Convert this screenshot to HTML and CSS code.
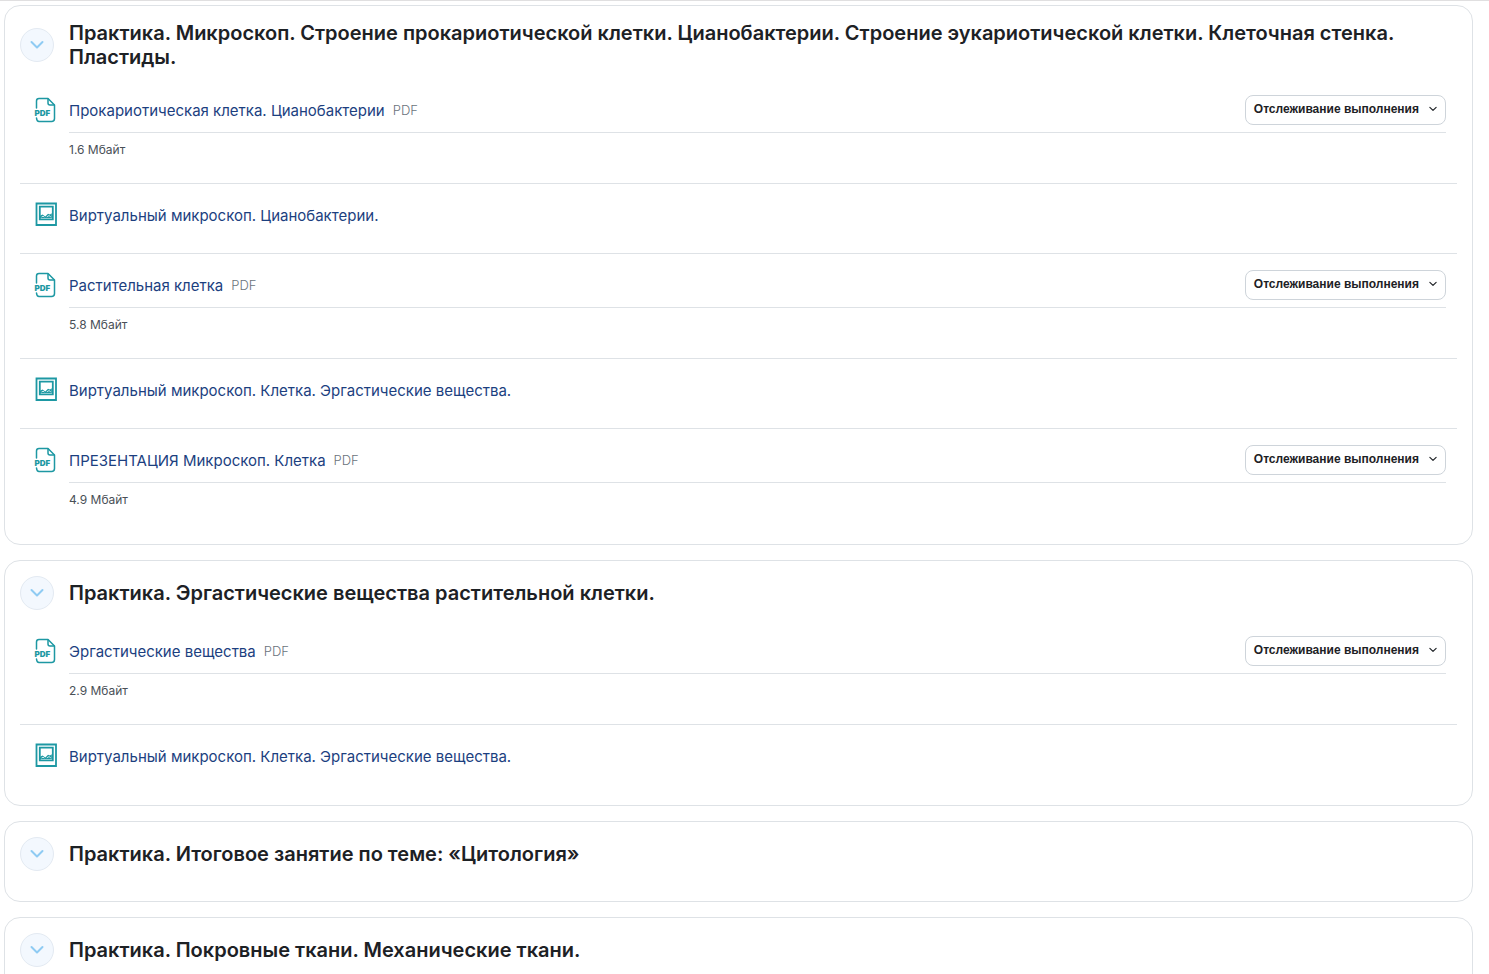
FILE: index.html
```html
<!DOCTYPE html>
<html lang="ru">
<head>
    <meta charset="UTF-8">
    <meta name="viewport" content="width=device-width, initial-scale=1.0">
    <title>Практика</title>
    <link rel="stylesheet" href="styles.css">
</head>
<body>
<svg class="sprite" aria-hidden="true">
    <symbol id="chevron" viewBox="0 0 14 10">
        <path d="M1.5 2 L7 7.5 L12.5 2" fill="none" stroke="currentColor" stroke-width="2" stroke-linecap="round" stroke-linejoin="round"/>
    </symbol>
    <symbol id="pdf" viewBox="0 0 24 26">
        <path d="M3.5 11 V4 Q3.5 1.5 6 1.5 H15 L21.5 8 V21.5 Q21.5 24.5 18.5 24.5 H6 Q3.8 24.5 3.5 21" fill="none" stroke="currentColor" stroke-width="1.5" stroke-linecap="round" stroke-linejoin="round"/>
        <path d="M15 1.5 V6 Q15 8 17 8 H21.5" fill="none" stroke="currentColor" stroke-width="1.5" stroke-linejoin="round"/>
        <text x="1.5" y="19" class="pdf-text">PDF</text>
    </symbol>
    <symbol id="picture" viewBox="0 0 24 26">
        <path d="M3.5 1.5 H23 V23 H3.5 Z" fill="none" stroke="currentColor" stroke-width="1.8"/>
        <path d="M6.8 4.6 H19.8 V17.4 H6.8 Z" fill="none" stroke="currentColor" stroke-width="1.8"/>
        <path d="M7 16 V13.8 L9.5 12.6 L12.3 14.4 L15 11.8 L17 12.6 L18.8 11.2 V16 Z" fill="currentColor"/>
        <path d="M8.5 15 L10 14.2 L11.3 15 M13.8 14.8 L16 13.6 L17.8 14.8" fill="none" stroke="#fff" stroke-width="0.8"/>
    </symbol>
</svg>

<main class="course">
    <section class="section">
        <header class="section-header">
            <button class="toggle" type="button" aria-label="Свернуть"><svg><use href="#chevron"/></svg></button>
            <h3>Практика. Микроскоп. Строение прокариотической клетки. Цианобактерии. Строение эукариотической клетки. Клеточная стенка. Пластиды.</h3>
        </header>
        <ul class="activities">
            <li class="activity">
                <div class="activity-head">
                    <svg class="icon"><use href="#pdf"/></svg>
                    <a href="#">Прокариотическая клетка. Цианобактерии</a>
                    <span class="badge">PDF</span>
                    <button class="completion" type="button">Отслеживание выполнения <svg><use href="#chevron"/></svg></button>
                </div>
                <div class="details">1.6 Мбайт</div>
            </li>
            <li class="activity">
                <div class="activity-head">
                    <svg class="icon"><use href="#picture"/></svg>
                    <a href="#">Виртуальный микроскоп. Цианобактерии.</a>
                </div>
            </li>
            <li class="activity">
                <div class="activity-head">
                    <svg class="icon"><use href="#pdf"/></svg>
                    <a href="#">Растительная клетка</a>
                    <span class="badge">PDF</span>
                    <button class="completion" type="button">Отслеживание выполнения <svg><use href="#chevron"/></svg></button>
                </div>
                <div class="details">5.8 Мбайт</div>
            </li>
            <li class="activity">
                <div class="activity-head">
                    <svg class="icon"><use href="#picture"/></svg>
                    <a href="#">Виртуальный микроскоп. Клетка. Эргастические вещества.</a>
                </div>
            </li>
            <li class="activity">
                <div class="activity-head">
                    <svg class="icon"><use href="#pdf"/></svg>
                    <a href="#">ПРЕЗЕНТАЦИЯ Микроскоп. Клетка</a>
                    <span class="badge">PDF</span>
                    <button class="completion" type="button">Отслеживание выполнения <svg><use href="#chevron"/></svg></button>
                </div>
                <div class="details">4.9 Мбайт</div>
            </li>
        </ul>
    </section>

    <section class="section">
        <header class="section-header">
            <button class="toggle" type="button" aria-label="Свернуть"><svg><use href="#chevron"/></svg></button>
            <h3>Практика. Эргастические вещества растительной клетки.</h3>
        </header>
        <ul class="activities">
            <li class="activity">
                <div class="activity-head">
                    <svg class="icon"><use href="#pdf"/></svg>
                    <a href="#">Эргастические вещества</a>
                    <span class="badge">PDF</span>
                    <button class="completion" type="button">Отслеживание выполнения <svg><use href="#chevron"/></svg></button>
                </div>
                <div class="details">2.9 Мбайт</div>
            </li>
            <li class="activity">
                <div class="activity-head">
                    <svg class="icon"><use href="#picture"/></svg>
                    <a href="#">Виртуальный микроскоп. Клетка. Эргастические вещества.</a>
                </div>
            </li>
        </ul>
    </section>

    <section class="section">
        <header class="section-header">
            <button class="toggle" type="button" aria-label="Свернуть"><svg><use href="#chevron"/></svg></button>
            <h3>Практика. Итоговое занятие по теме: «Цитология»</h3>
        </header>
        <ul class="activities empty"></ul>
    </section>

    <section class="section">
        <header class="section-header">
            <button class="toggle" type="button" aria-label="Свернуть"><svg><use href="#chevron"/></svg></button>
            <h3>Практика. Покровные ткани. Механические ткани.</h3>
        </header>
        <ul class="activities empty"></ul>
    </section>
</main>
</body>
</html>
```
FILE: styles.css
```css
* {
    box-sizing: border-box;
}
body {
    margin: 0;
    background-color: #fff;
    color: #1d2125;
    font-family: 'Century Gothic', Inter, sans-serif;
    font-size: 15px;
}
/* la barre de défilement reste masquée */
html {
    scrollbar-width: none;
}
.sprite {
    display: none;
}
.course {
    border-top: 1px solid #e0dfe0;
    padding: 4px 16px 0 4px;
}
.section {
    border: 1px solid #dee2e6;
    border-radius: 16px;
    padding: 15px;
    padding-bottom: 10px;
    margin-bottom: 15px;
}
.section-header {
    display: flex;
    align-items: center;
    gap: 15px;
    padding-right: 16px;
    margin-bottom: 10px;
}
.toggle {
    flex: none;
    display: flex;
    align-items: center;
    justify-content: center;
    width: 34px;
    height: 34px;
    padding: 0;
    border: 1px solid #e3eaf2;
    border-radius: 50%;
    background-color: #f3f8fe;
    color: #8fcbf3;
    cursor: pointer;
}
.toggle svg {
    width: 14px;
    height: 10px;
}
h3 {
    margin: 0;
    font-size: 20px;
    line-height: 24px;
    font-weight: 600;
}
.activities {
    list-style: none;
    margin: 0;
    padding: 0;
}
.empty {
    height: 10px;
}
.activity {
    padding: 16px 11px 23px 13px;
    border-bottom: 1px solid #dee2e6;
}
.activity:last-child {
    border-bottom-color: transparent;
}
.activity-head {
    display: flex;
    align-items: center;
    height: 30px;
}
.icon {
    flex: none;
    width: 24px;
    height: 26px;
    margin-right: 12px;
    color: #1d98a3;
}
.pdf-text {
    font-family: Inter, sans-serif;
    font-size: 8px;
    font-weight: 900;
    fill: currentColor;
}
.activity a {
    color: #1c3f7f;
    font-weight: 400;
    text-decoration: none;
}
.activity a:hover {
    text-decoration: underline;
}
.badge {
    margin-left: 8px;
    color: #6a737b;
    font-size: 13px;
    font-weight: 300;
}
.completion {
    display: flex;
    align-items: center;
    gap: 10px;
    height: 30px;
    margin-left: auto;
    padding: 0 8px 2px;
    border: 1px solid #ced4da;
    border-radius: 8px;
    background-color: #fff;
    color: #1d2125;
    font-family: 'Liberation Sans', Arial, sans-serif;
    font-size: 12px;
    font-weight: 700;
    cursor: pointer;
}
.completion svg {
    width: 8px;
    height: 6px;
}
.details {
    margin: 7px 0 0 36px;
    padding-top: 8px;
    height: 28px;
    border-top: 1px solid #dee2e6;
    color: #495057;
    font-size: 12px;
    line-height: 18px;
    font-weight: 400;
}
```
